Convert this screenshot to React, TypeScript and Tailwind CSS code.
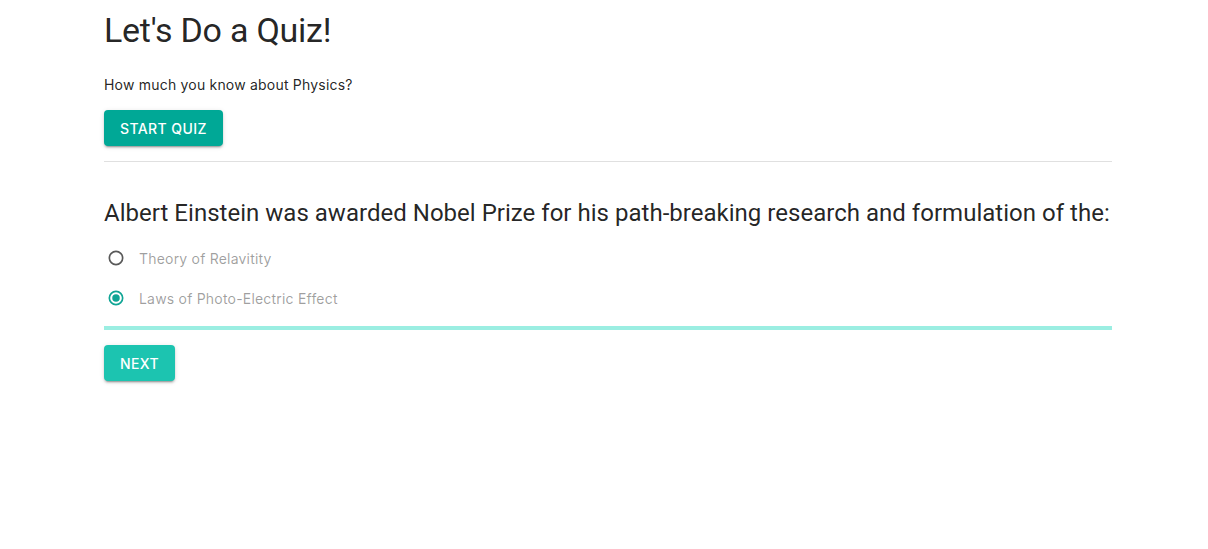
import React from "react";

export default function App() {
  const inter = { fontFamily: "Inter, Roboto, 'Liberation Sans', sans-serif" };
  const roboto = { fontFamily: "Roboto, 'Liberation Sans', sans-serif" };
  return (
    <div className="min-h-[549px] bg-white" style={inter}>
      <div className="ml-[104px] w-[1008px] pt-[9px]">
        <h1 className="text-[34px] leading-[42px] font-normal text-[rgba(0,0,0,0.87)] tracking-[-0.25px]" style={roboto}>
          Let's Do a Quiz!
        </h1>
        <p className="mt-[24px] text-[14px] leading-[20px] text-[rgba(0,0,0,0.87)] tracking-[0.2px]">
          How much you know about Physics?
        </p>
        <button className="mt-[15px] h-[36px] px-[16px] rounded-[4px] bg-[#00a896] text-white text-[14px] font-medium uppercase tracking-[0.4px] shadow-[0_3px_1px_-2px_rgba(0,0,0,0.2),0_2px_2px_0_rgba(0,0,0,0.14),0_1px_5px_0_rgba(0,0,0,0.12)]">
          Start Quiz
        </button>
        <div className="mt-[15px] h-px bg-[#e0e0e0]" />
        <h2 className="mt-[35px] text-[24px] leading-[32px] font-normal text-[rgba(0,0,0,0.87)] tracking-[0.02px]" style={roboto}>
          Albert Einstein was awarded Nobel Prize for his path-breaking research and formulation of the:
        </h2>
        <div className="mt-[9px] flex flex-col">
          <label className="flex items-center h-[40px]">
            <span className="w-[24px] flex justify-center">
              <svg width="20" height="20" viewBox="0 0 24 24">
                <circle cx="12" cy="12" r="8" fill="none" stroke="#595959" strokeWidth="2" />
              </svg>
            </span>
            <span className="ml-[11px] text-[14px] text-[rgba(0,0,0,0.38)] tracking-[0.2px]">Theory of Relavitity</span>
          </label>
          <label className="flex items-center h-[40px]">
            <span className="w-[24px] flex justify-center">
              <svg width="20" height="20" viewBox="0 0 24 24">
                <circle cx="12" cy="12" r="8" fill="none" stroke="#10a595" strokeWidth="2" />
                <circle cx="12" cy="12" r="4.5" fill="#10a595" />
              </svg>
            </span>
            <span className="ml-[11px] text-[14px] text-[rgba(0,0,0,0.38)] tracking-[0.2px]">Laws of Photo-Electric Effect</span>
          </label>
        </div>
        <div className="mt-[8px] h-[4px] bg-[#9beee2]" />
        <button className="mt-[15px] h-[36px] px-[16px] rounded-[4px] bg-[#1cc4b0] text-white text-[14px] font-medium uppercase tracking-[0.4px] shadow-[0_3px_1px_-2px_rgba(0,0,0,0.2),0_2px_2px_0_rgba(0,0,0,0.14),0_1px_5px_0_rgba(0,0,0,0.12)]">
          Next
        </button>
      </div>
    </div>
  );
}
